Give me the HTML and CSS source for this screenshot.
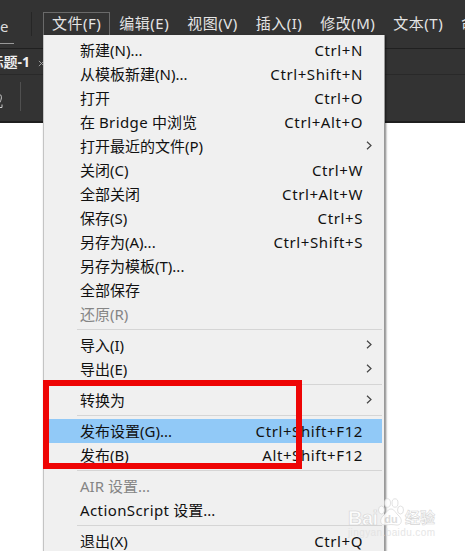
FILE: index.html
```html
<!DOCTYPE html>
<html lang="zh-CN">
<head>
    <meta charset="UTF-8">
    <meta name="viewport" content="width=device-width, initial-scale=1.0">
    <title>文件</title>
    <link rel="stylesheet" href="styles.css">
</head>
<body>
    <div class="app">
        <header class="toolbar">
            <div class="menubar">
                <div class="logo">e</div>
                <nav class="menus">
                    <span class="menu-title open">文件(F)</span>
                    <span class="menu-title">编辑(E)</span>
                    <span class="menu-title">视图(V)</span>
                    <span class="menu-title">插入(I)</span>
                    <span class="menu-title">修改(M)</span>
                    <span class="menu-title">文本(T)</span>
                    <span class="menu-title">命</span>
                </nav>
            </div>
            <div class="tabs">
                <div class="tab"><span class="tab-name">标题-1</span></div>
                <svg class="tab-close" viewBox="0 0 8 8"><path d="M1 1l6 6M7 1l-6 6"/></svg>
            </div>
            <div class="options">
                <svg class="tool" viewBox="0 0 4 16"><path d="M0 1.500c2 1 2 5-1 9M0 14.500h2v-3"/></svg>
            </div>
        </header>

        <!-- File menu -->
        <ul class="menu">
            <li>新建(N)...<span class="key">Ctrl+N</span></li>
            <li>从模板新建(N)...<span class="key">Ctrl+Shift+N</span></li>
            <li>打开<span class="key">Ctrl+O</span></li>
            <li><span class="label">在 <span class="latin">Bridge</span> 中浏览</span><span class="key">Ctrl+Alt+O</span></li>
            <li>打开最近的文件(P)<svg class="arrow" viewBox="0 0 6 9"><path d="M1 .7l4 3.800-4 3.800"/></svg></li>
            <li>关闭(C)<span class="key">Ctrl+W</span></li>
            <li>全部关闭<span class="key">Ctrl+Alt+W</span></li>
            <li>保存(S)<span class="key">Ctrl+S</span></li>
            <li>另存为(A)...<span class="key">Ctrl+Shift+S</span></li>
            <li>另存为模板(T)...</li>
            <li>全部保存</li>
            <li class="disabled">还原(R)</li>
            <li class="separator"></li>
            <li>导入(I)<svg class="arrow" viewBox="0 0 6 9"><path d="M1 .7l4 3.800-4 3.800"/></svg></li>
            <li>导出(E)<svg class="arrow" viewBox="0 0 6 9"><path d="M1 .7l4 3.800-4 3.800"/></svg></li>
            <li class="separator"></li>
            <li>转换为<svg class="arrow" viewBox="0 0 6 9"><path d="M1 .7l4 3.800-4 3.800"/></svg></li>
            <li class="separator"></li>
            <li class="active">发布设置(G)...<span class="key">Ctrl+Shift+F12</span></li>
            <li>发布(B)<span class="key">Alt+Shift+F12</span></li>
            <li class="separator"></li>
            <li class="disabled">AIR 设置...</li>
            <li><span class="label"><span class="latin">ActionScript</span> 设置...</span></li>
            <li class="separator"></li>
            <li>退出(X)<span class="key">Ctrl+Q</span></li>
        </ul>

        <div class="highlight-box"></div>

        <!-- Watermark -->
        <div class="watermark">
            <div class="brand">
                <span class="bai">Bai</span>
                <svg class="paw" viewBox="0 0 26 28">
                    <ellipse cx="3.500" cy="12" rx="3" ry="4"/>
                    <ellipse cx="9.500" cy="5" rx="3" ry="4.200"/>
                    <ellipse cx="17" cy="5" rx="3" ry="4.200"/>
                    <ellipse cx="22.500" cy="12" rx="3" ry="4"/>
                    <path d="M13 11c3 0 4 3 7 6 6 5 3 11-2 10-3-.6-7-.6-10 0-5 1-8-5-2-10 3-3 4-6 7-6z"/>
                    <text x="13" y="25">du</text>
                </svg>
                <span class="exp">经验</span>
            </div>
            <div class="site">jingyan.baidu.com</div>
        </div>
    </div>
</body>
</html>
```
FILE: styles.css
```css
body {
    margin: 0;
    background-color: #fff;
    font-family: "Noto Sans", "Noto Sans CJK SC", sans-serif;
}
.app {
    position: relative;
    width: 465px;
    height: 551px;
    overflow: hidden;
}
.toolbar {
    height: 123px;
    box-sizing: border-box;
    background-color: #333;
    border-bottom: 2px solid #1f1f1f;
}
.menubar {
    display: flex;
    height: 49px;
    box-sizing: border-box;
    border-bottom: 1px solid #202020;
}
.logo {
    flex: none;
    width: 14px;
    height: 44px;
    box-sizing: border-box;
    padding-top: 15px;
    margin-right: 17px;
    border-bottom: 1px solid #999;
    color: #ddd;
    font-size: 15px;
    line-height: 22px;
}
.menus {
    display: flex;
    flex: none;
    height: 36px;
    padding: 12px 0 0 12px;
    box-sizing: border-box;
    background: linear-gradient(#262626, #262626) 0 12px / 1px 24px no-repeat;
}
.menu-title {
    box-sizing: border-box;
    height: 24px;
    padding: 0 8px;
    border: 1px solid transparent;
    color: #e4e4e4;
    font-size: 15px;
    line-height: 21px;
    letter-spacing: 0.5px;
    white-space: nowrap;
}
.menu-title.open {
    border-color: #6a6a6a;
}
.tabs {
    display: flex;
    align-items: center;
    height: 26px;
    box-sizing: border-box;
    border-bottom: 1px solid #292929;
}
.tab {
    display: flex;
    justify-content: flex-end;
    width: 30px;
    overflow: hidden;
}
.tab-name {
    flex: none;
    color: #eee;
    font-size: 14px;
    font-weight: bold;
    line-height: 24px;
}
.tab-close {
    width: 7px;
    height: 7px;
    margin: 3px 0 0 8px;
    fill: none;
    stroke: #aaa;
}
.options {
    display: flex;
    height: 44px;
    align-items: center;
    width: 21px;
    box-sizing: border-box;
    padding-top: 8px;
    background: linear-gradient(#505050, #505050) 100% 7px / 1px 29px no-repeat;
}
.tool {
    width: 4px;
    height: 16px;
    fill: none;
    stroke: #ccc;
}

/* Dropdown */
.menu {
    position: absolute;
    left: 43px;
    top: 35px;
    width: 342px;
    height: 530px;
    box-sizing: border-box;
    margin: 0;
    padding: 3px 2px 0;
    list-style: none;
    background-color: #f0f0f0;
    border: solid #c4c4c4;
    border-width: 0 1px 0 1px;
    border-right-color: #999;
    box-shadow: 1px 1px 2px rgba(0, 0, 0, 0.5);
}
.menu li {
    display: flex;
    align-items: center;
    justify-content: space-between;
    height: 24px;
    padding: 0 19px 0 34px;
    color: #111;
    font-size: 15px;
    line-height: 24px;
    white-space: pre;
}
.menu li.disabled {
    color: #858585;
}
.menu li.active {
    background-color: #91c9f7;
}
.menu li.separator {
    height: 1px;
    margin: 3px 0 3px 31px;
    padding: 0;
    background-color: #d5d5d5;
}
.key {
    letter-spacing: 0.6px;
}
.latin {
    letter-spacing: 0.4px;
}
.arrow {
    width: 6px;
    height: 9px;
    margin: -2px -9px 0 0;
    fill: none;
    stroke: #444;
    stroke-width: 1.2;
}
.highlight-box {
    position: absolute;
    left: 43px;
    top: 380px;
    width: 259px;
    height: 89px;
    box-sizing: border-box;
    border: 6px solid #ee0505;
}

/* Watermark */
.watermark {
    position: absolute;
    left: 348px;
    top: 497px;
    width: 90px;
    font-family: "Liberation Sans", "Noto Sans CJK SC", sans-serif;
    opacity: 0.85;
}
.brand {
    display: flex;
    align-items: flex-end;
    height: 29px;
    color: #fff;
    -webkit-text-stroke: 0.6px #cfcfcf;
}
.bai {
    width: 30px;
    font-size: 20px;
    font-weight: bold;
    line-height: 16px;
    letter-spacing: -0.5px;
}
.paw {
    flex: none;
    width: 26px;
    height: 28px;
    fill: #fff;
    stroke: #d0d0d0;
    stroke-width: 0.7;
}
.paw text {
    font-size: 11px;
    font-weight: bold;
    text-anchor: middle;
    fill: #d8d8d8;
    stroke: none;
    -webkit-text-stroke: 0;
}
.exp {
    margin-left: 1px;
    font-size: 15px;
    font-weight: bold;
    line-height: 17px;
    white-space: nowrap;
}
.site {
    margin-top: 1px;
    color: #e2e2e2;
    font-size: 10px;
    line-height: 12px;
    letter-spacing: 0.4px;
}
```
